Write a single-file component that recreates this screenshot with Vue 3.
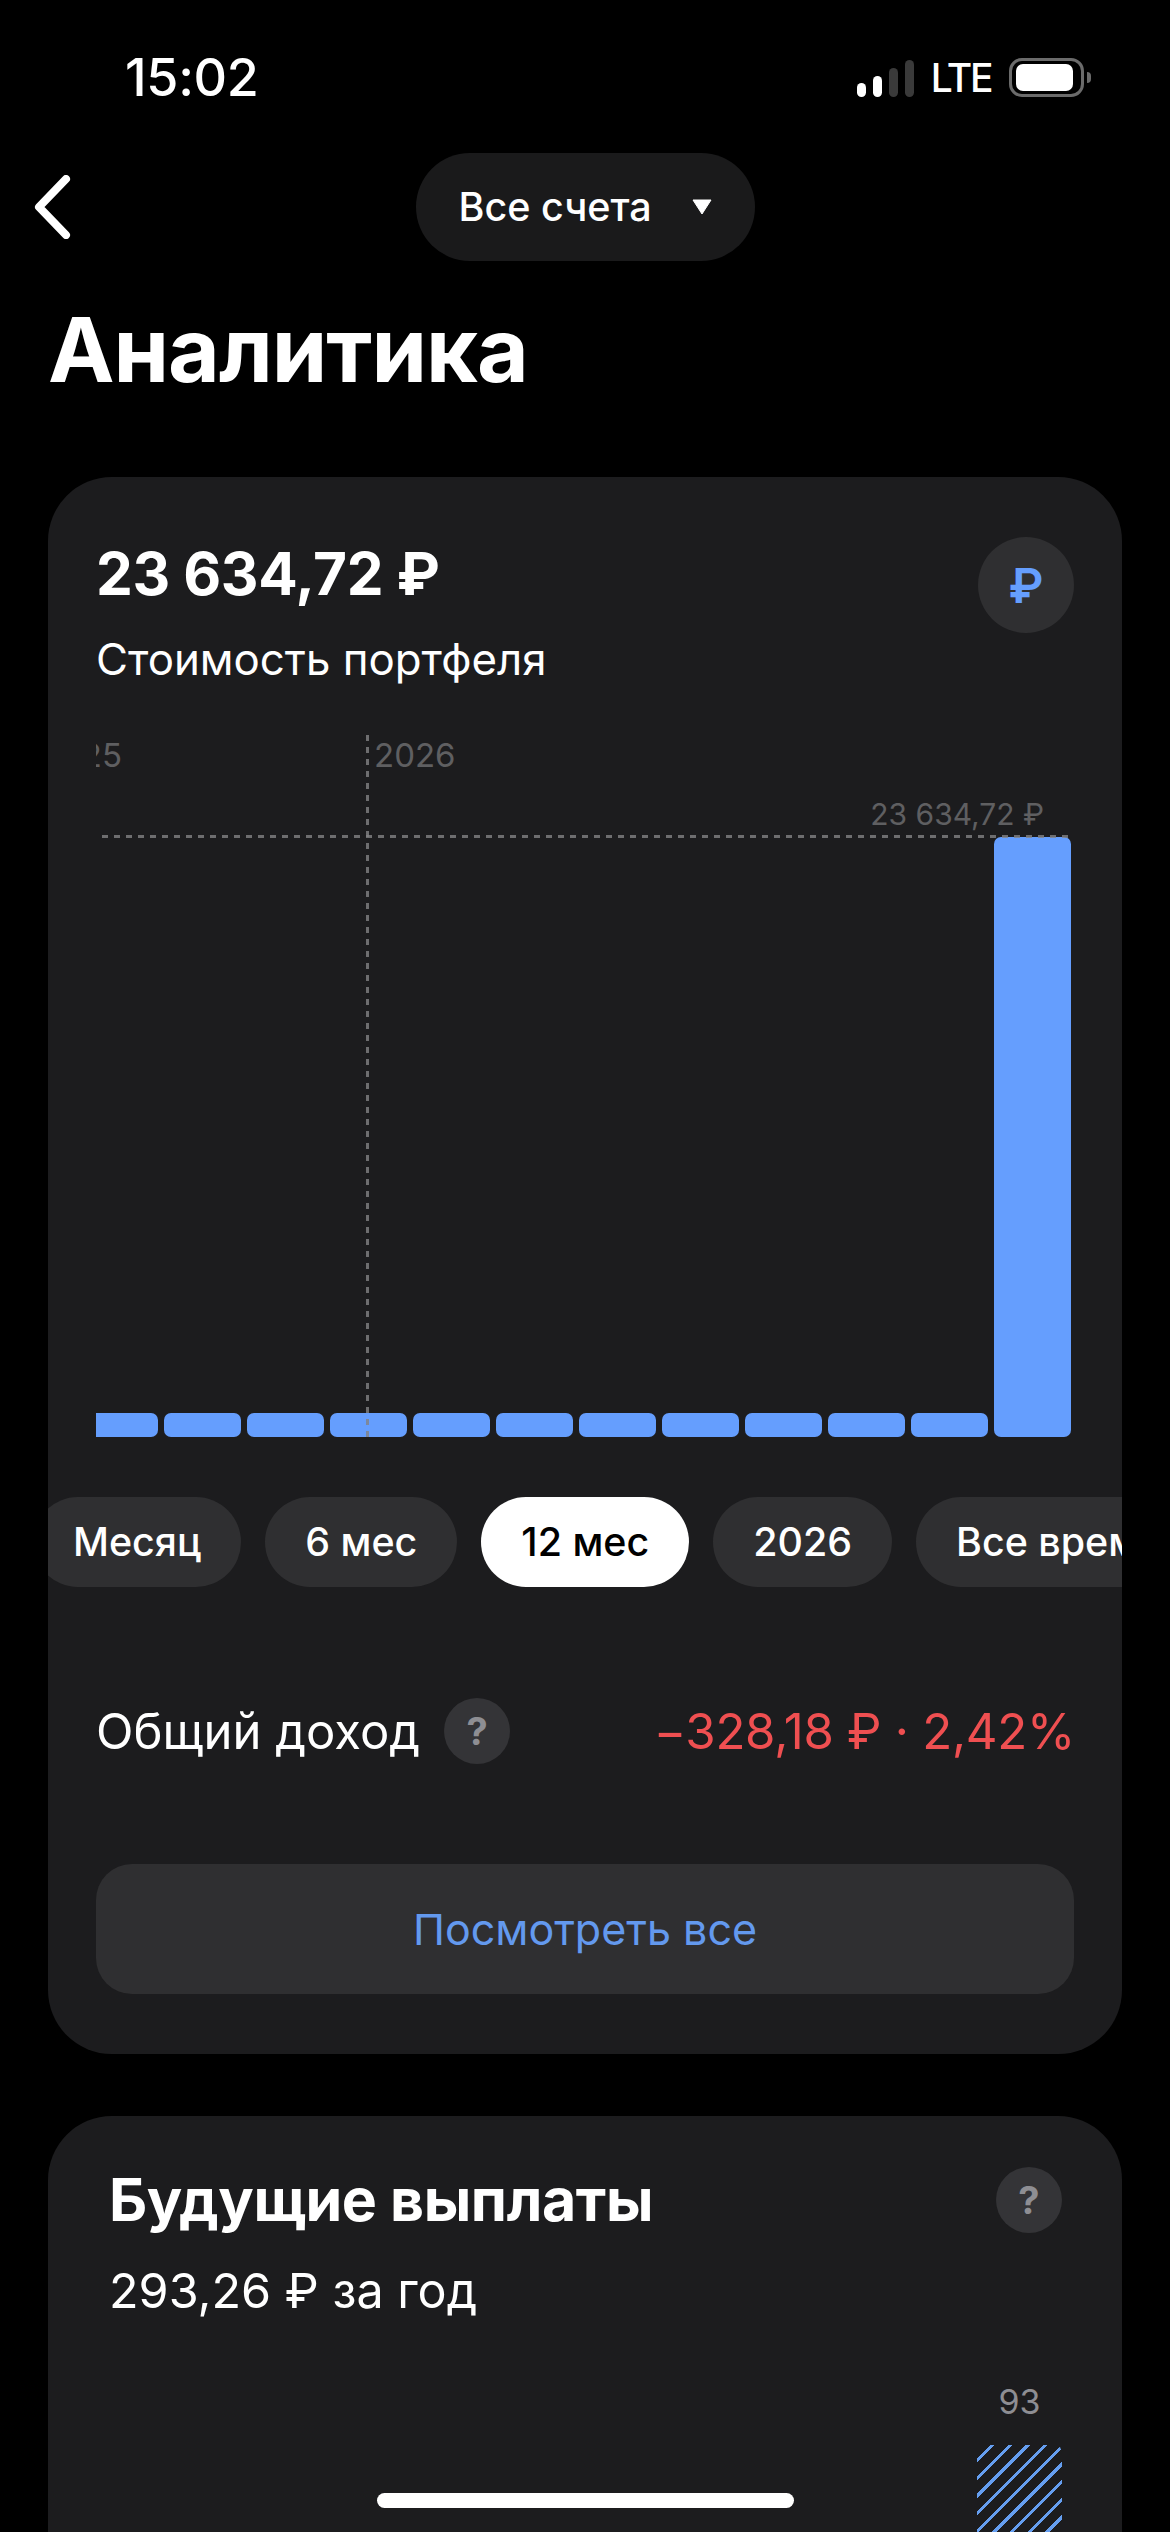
<script setup>
const bars = Array.from({ length: 11 })
const periods = [
  { label: 'Месяц' },
  { label: '6 мес' },
  { label: '12 мес', active: true },
  { label: '2026' },
  { label: 'Все время' }
]
</script>

<template>
  <div class="screen">
    <div class="status">
      <span class="time">15:02</span>
      <div class="status-right">
        <div class="signal">
          <i class="s1"></i><i class="s2"></i><i class="s3"></i><i class="s4"></i>
        </div>
        <span class="lte">LTE</span>
        <div class="battery"><div class="battery-fill"></div></div>
        <div class="battery-nub"></div>
      </div>
    </div>

    <div class="nav">
      <svg class="back" width="40" height="64" viewBox="0 0 40 64">
        <path d="M33 4 L6 32 L33 60" fill="none" stroke="#fff" stroke-width="8" stroke-linecap="round" stroke-linejoin="round" />
      </svg>
      <div class="account">
        <span>Все счета</span>
        <svg width="22" height="16" viewBox="0 0 22 16"><path d="M2 1 H20 L11 15 Z" fill="#fff" stroke="#fff" stroke-width="1" stroke-linejoin="round" /></svg>
      </div>
    </div>

    <h1 class="title">Аналитика</h1>

    <section class="card portfolio">
      <div class="head">
        <div>
          <div class="amount">23 634,72 ₽</div>
          <div class="caption">Стоимость портфеля</div>
        </div>
        <div class="currency">₽</div>
      </div>

      <div class="chart">
        <span class="year year-old">2025</span>
        <span class="year year-new">2026</span>
        <span class="max-label">23 634,72 ₽</span>
        <div class="bars">
          <div v-for="(b, i) in bars" :key="i" class="bar"></div>
          <div class="bar bar-max"></div>
        </div>
        <div class="line-v"></div>
        <div class="line-h"></div>
      </div>

      <div class="periods">
        <div v-for="p in periods" :key="p.label" class="period" :class="{ active: p.active }">{{ p.label }}</div>
      </div>

      <div class="income">
        <div class="income-label">
          <span>Общий доход</span>
          <span class="help">?</span>
        </div>
        <span class="income-value">−328,18 ₽ · 2,42%</span>
      </div>

      <div class="view-all">Посмотреть все</div>
    </section>

    <section class="card payouts">
      <div class="head">
        <div>
          <h2 class="payouts-title">Будущие выплаты</h2>
          <div class="payouts-sub">293,26 ₽ за год</div>
        </div>
        <span class="help help-top">?</span>
      </div>
      <div class="forecast">
        <span class="forecast-value">93</span>
        <div class="hatch"></div>
      </div>
    </section>

    <div class="home-bar"></div>
  </div>
</template>

<style>
html, body { margin: 0; background: #000; }
</style>

<style scoped>
.screen {
  position: relative;
  width: 1170px;
  height: 2532px;
  overflow: hidden;
  background: #000;
  color: #fff;
  font-family: Inter, "Noto Sans", sans-serif;
}

.status {
  height: 153px;
  box-sizing: border-box;
  padding: 52px 79px 0 125px;
  display: flex;
  justify-content: space-between;
  align-items: flex-start;
}
.time { font-size: 52px; line-height: 52px; font-weight: 500; letter-spacing: -0.3px; }
.status-right { display: flex; align-items: center; height: 39px; margin-top: 6px; }
.signal { display: flex; align-items: flex-end; gap: 7px; height: 37px; margin-top: 1px; }
.signal i { display: block; width: 9px; border-radius: 5px; }
.s1 { height: 14px; background: #fff; }
.s2 { height: 21px; background: #fff; }
.s3 { height: 29px; background: #3a3a3a; }
.s4 { height: 37px; background: #3a3a3a; }
.lte { font-size: 39px; line-height: 39px; font-weight: 500; margin: 0 18px 0 17px; letter-spacing: -2.4px; }
.battery {
  width: 75px; height: 39px; box-sizing: border-box;
  border: 3px solid #6b6b6b; border-radius: 13px; padding: 3px 8px 3px 4px;
}
.battery-fill { width: 100%; height: 100%; background: #fff; border-radius: 7px; }
.battery-nub { width: 4px; height: 11px; background: #6b6b6b; border-radius: 0 5px 5px 0; margin-left: 3px; }

.nav { height: 108px; display: flex; justify-content: center; position: relative; }
.back { position: absolute; left: 33px; top: 22px; }
.account {
  width: 339px; height: 108px; box-sizing: border-box;
  background: #1a1a1b; border-radius: 54px;
  display: flex; align-items: center; justify-content: space-between;
  padding: 0 42px 0 43px;
  font-size: 39.5px; font-weight: 500;
}

.title { margin: 35px 0 0 48px; font-size: 89.2px; line-height: 108px; font-weight: 700; letter-spacing: -1px; }

.card {
  margin: 0 48px;
  background: #1c1c1e;
  border-radius: 64px;
  overflow: hidden;
}
.portfolio { margin-top: 73px; height: 1577px; padding: 0 48px; position: relative; }
.head { display: flex; justify-content: space-between; align-items: flex-start; }
.portfolio .head { padding: 60px 0 0; height: 201px; box-sizing: border-box; margin-right: 0; }
.amount { font-size: 58.5px; line-height: 70px; font-weight: 700; letter-spacing: -0.4px; margin-top: 2px; }
.caption { font-size: 43.8px; line-height: 52px; margin-top: 25px; }
.currency {
  width: 96px; height: 96px; border-radius: 50%; background: #2f2f31;
  color: #659efe; font-size: 48px; font-weight: 600;
  display: flex; align-items: center; justify-content: center;
}

.chart {
  position: relative;
  margin-top: 57px;
  width: 975px;
  height: 702px;
  overflow: hidden;
}
.bars { position: absolute; right: 0; bottom: 0; left: -15px; display: flex; gap: 6px; align-items: flex-end; justify-content: flex-end; height: 600px; }
.bar { width: 77px; height: 24px; flex: none; background: #659efe; border-radius: 7px; }
.bar-max { height: 600px; }
.year { position: absolute; top: 4px; font-size: 33px; line-height: 32px; color: #5f5f61; }
.year-old { right: 949px; }
.year-new { left: 278px; }
.max-label { position: absolute; top: 60px; right: 27px; font-size: 30px; line-height: 38px; color: #5f5f61; white-space: nowrap; }
.line-v {
  position: absolute; left: 270px; top: 0; bottom: 0; width: 3px;
  background: repeating-linear-gradient(to bottom, rgba(130,130,132,0.8) 0 6px, transparent 6px 12px);
}
.line-h {
  position: absolute; left: 6px; right: 0; top: 100px; height: 3px;
  background: repeating-linear-gradient(to right, rgba(130,130,132,0.8) 0 6px, transparent 6px 12px);
}

.periods { display: flex; gap: 24px; margin: 60px 0 0 -63px; width: max-content; }
.period {
  height: 90px; padding: 0 40px; border-radius: 45px; background: #2f2f31;
  display: flex; align-items: center; font-size: 39.4px; font-weight: 500;
  white-space: nowrap;
}
.period.active { background: #fff; color: #000; }

.income { display: flex; justify-content: space-between; align-items: center; margin-top: 111px; height: 66px; }
.income-label { display: flex; align-items: center; gap: 24px; font-size: 49px; }
.income-value { font-size: 49.2px; color: #ef4f51; letter-spacing: -0.3px; margin-right: -1px; }
.help {
  width: 66px; height: 66px; border-radius: 50%; background: #343437; flex: none;
  color: #8e8e93; font-size: 38px; font-weight: 700;
  display: flex; align-items: center; justify-content: center;
}

.view-all {
  margin-top: 100px; height: 130px; border-radius: 36px; background: #2f2f31;
  color: #6399ee; font-size: 43px;
  display: flex; align-items: center; justify-content: center;
}

.payouts { margin-top: 62px; padding: 51px 60px 0 61px; height: 500px; }
.payouts-title { margin: 0; font-size: 59px; line-height: 66px; font-weight: 700; letter-spacing: -0.4px; }
.payouts-sub { font-size: 48.5px; line-height: 58px; margin-top: 29px; }
.forecast { display: flex; flex-direction: column; align-items: center; width: 85px; margin: 62px 0 0 auto; }
.forecast-value { font-size: 34px; line-height: 40px; color: #8e8e93; }
.hatch {
  margin-top: 23px;
  width: 85px; height: 120px; flex: none; border-radius: 8px 8px 0 0;
  background: repeating-linear-gradient(135deg, transparent 0 9.5px, #659ef0 9.5px 12.5px);
}

.home-bar {
  position: absolute; left: 377px; top: 2493px;
  width: 417px; height: 15px; border-radius: 8px; background: #fff;
}
</style>
